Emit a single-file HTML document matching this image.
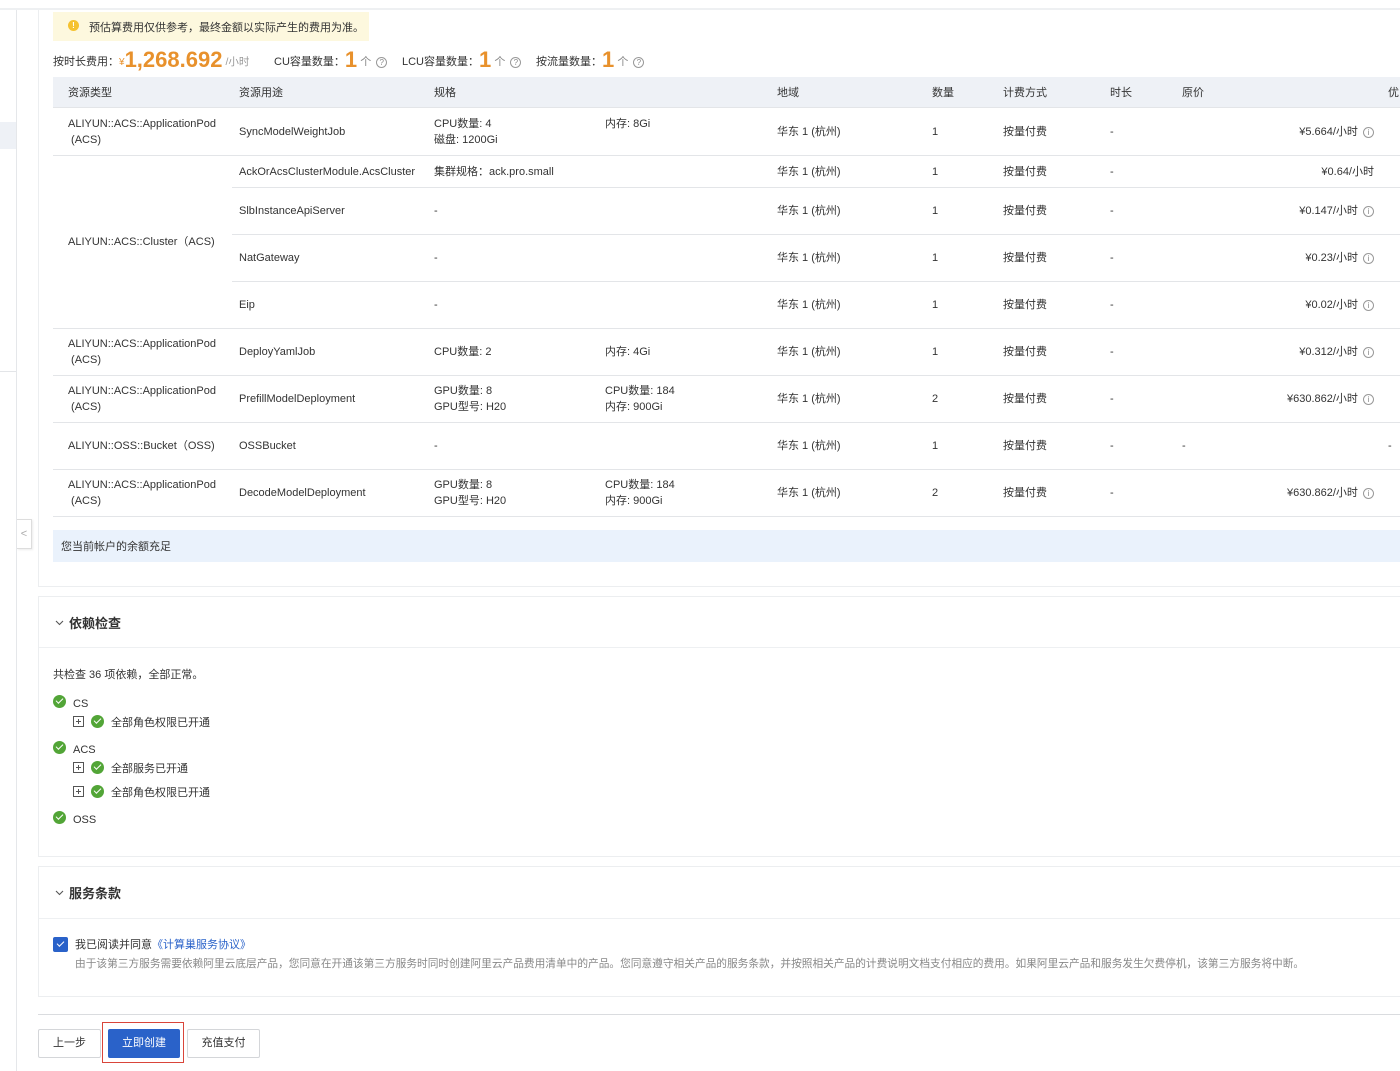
<!DOCTYPE html>
<html><head><meta charset="utf-8">
<style>
*{margin:0;padding:0;box-sizing:border-box}
body{width:1400px;height:1071px;overflow:hidden;background:#fff;font-family:"Liberation Sans","Noto Sans CJK SC",sans-serif;color:#333;font-size:11px;position:relative}
.a{position:absolute;white-space:nowrap}
.t{line-height:14px;transform:translateY(1px)}
.t2{line-height:16px;transform:translateY(1px)}
.hl{position:absolute;height:1px;background:#e3e5e8}
.ic{display:inline-block;width:11px;height:11px;border:1px solid #999;border-radius:50%;font-size:8px;line-height:9px;text-align:center;color:#888;vertical-align:middle;margin-left:2px}
.ok{position:absolute;width:13px;height:13px;border-radius:50%;background:#52a537}
.ok:after{content:"";position:absolute;left:3px;top:3px;width:6px;height:3px;border-left:1.6px solid #fff;border-bottom:1.6px solid #fff;transform:rotate(-45deg)}
.pl{position:absolute;width:11px;height:11px;border:1px solid #555}
.pl:before{content:"";position:absolute;left:2px;top:4px;width:5px;height:1px;background:#555}
.pl:after{content:"";position:absolute;left:4px;top:2px;width:1px;height:5px;background:#555}
.btn{position:absolute;height:29px;border:1px solid #d4d6d9;border-radius:2px;background:#fff;font-size:11px;text-align:center;line-height:27px;color:#333}
</style></head><body>
<div class="a" style="left:0;top:0;width:1400px;height:10px;background:#fff;border-bottom:2px solid #eef0f2"></div>
<div class="a" style="left:0;top:10px;width:17px;height:1061px;border-right:1px solid #e5e7ea;background:#fff"></div>
<div class="a" style="left:0;top:122px;width:16px;height:27px;background:#eef1f6"></div>
<div class="hl" style="left:0;top:371px;width:16px"></div>
<div class="a" style="left:17px;top:519px;width:15px;height:30px;border:1px solid #ddd;border-left:none;background:#fff;color:#aaa;font-size:11px;line-height:28px;text-align:center;box-shadow:1px 1px 2px rgba(0,0,0,.08)">&lt;</div>
<div class="a" style="left:38px;top:10px;width:1370px;height:577px;border:1px solid #eceef0;border-top:none"></div>
<div class="a" style="left:53px;top:12px;width:316px;height:29px;background:#fdf8de"></div>
<div class="a" style="left:68px;top:20px;width:11px;height:11px;border-radius:50%;background:#f5c230;color:#fff;font-size:8px;line-height:11px;text-align:center;font-weight:bold">!</div>
<div class="a t" style="left:89px;top:20px;color:#333">预估算费用仅供参考，最终金额以实际产生的费用为准。</div>
<div class="a" style="left:53px;top:48px;height:24px;line-height:24px;font-size:11px;color:#333">按时长费用：<span style="color:#e8912c;font-size:10px">¥</span><span style="color:#e8912c;font-size:22px;font-weight:bold;vertical-align:-2px">1,268.692</span> <span style="color:#999;font-size:10.5px">/小时</span></div>
<div class="a" style="left:274px;top:48px;height:24px;line-height:24px">CU容量数量：<span style="color:#e8912c;font-size:22px;font-weight:bold;vertical-align:-2px">1</span> <span style="color:#888">个</span> <span class="ic">?</span></div>
<div class="a" style="left:402px;top:48px;height:24px;line-height:24px">LCU容量数量：<span style="color:#e8912c;font-size:22px;font-weight:bold;vertical-align:-2px">1</span> <span style="color:#888">个</span> <span class="ic">?</span></div>
<div class="a" style="left:536px;top:48px;height:24px;line-height:24px">按流量数量：<span style="color:#e8912c;font-size:22px;font-weight:bold;vertical-align:-2px">1</span> <span style="color:#888">个</span> <span class="ic">?</span></div>
<div class="a" style="left:53px;top:77px;width:1347px;height:30px;background:#eef1f6"></div>
<div class="a t" style="left:68px;top:85px">资源类型</div>
<div class="a t" style="left:239px;top:85px">资源用途</div>
<div class="a t" style="left:434px;top:85px">规格</div>
<div class="a t" style="left:777px;top:85px">地域</div>
<div class="a t" style="left:932px;top:85px">数量</div>
<div class="a t" style="left:1003px;top:85px">计费方式</div>
<div class="a t" style="left:1110px;top:85px">时长</div>
<div class="a t" style="left:1182px;top:85px">原价</div>
<div class="a t" style="left:1388px;top:85px">优</div>
<div class="hl" style="left:53px;top:107px;width:1347px"></div>
<div class="hl" style="left:53px;top:155px;width:1347px"></div>
<div class="hl" style="left:232px;top:187px;width:1168px"></div>
<div class="hl" style="left:232px;top:234px;width:1168px"></div>
<div class="hl" style="left:232px;top:281px;width:1168px"></div>
<div class="hl" style="left:53px;top:328px;width:1347px"></div>
<div class="hl" style="left:53px;top:375px;width:1347px"></div>
<div class="hl" style="left:53px;top:422px;width:1347px"></div>
<div class="hl" style="left:53px;top:469px;width:1347px"></div>
<div class="hl" style="left:53px;top:516px;width:1347px"></div>
<div class="a t2" style="left:68px;top:115px">ALIYUN::ACS::ApplicationPod<br>&nbsp;(ACS)</div>
<div class="a t" style="left:239px;top:124px">SyncModelWeightJob</div>
<div class="a t2" style="left:434px;top:115px">CPU数量: 4<br>磁盘: 1200Gi</div>
<div class="a t" style="left:605px;top:116px">内存: 8Gi</div>
<div class="a t" style="left:68px;top:234px">ALIYUN::ACS::Cluster（ACS)</div>
<div class="a t" style="left:239px;top:164px">AckOrAcsClusterModule.AcsCluster</div>
<div class="a t" style="left:434px;top:164px">集群规格：ack.pro.small</div>
<div class="a t" style="left:239px;top:203px">SlbInstanceApiServer</div>
<div class="a t" style="left:434px;top:203px">-</div>
<div class="a t" style="left:239px;top:250px">NatGateway</div>
<div class="a t" style="left:434px;top:250px">-</div>
<div class="a t" style="left:239px;top:297px">Eip</div>
<div class="a t" style="left:434px;top:297px">-</div>
<div class="a t2" style="left:68px;top:335px">ALIYUN::ACS::ApplicationPod<br>&nbsp;(ACS)</div>
<div class="a t" style="left:239px;top:344px">DeployYamlJob</div>
<div class="a t" style="left:434px;top:344px">CPU数量: 2</div>
<div class="a t" style="left:605px;top:344px">内存: 4Gi</div>
<div class="a t2" style="left:68px;top:382px">ALIYUN::ACS::ApplicationPod<br>&nbsp;(ACS)</div>
<div class="a t" style="left:239px;top:391px">PrefillModelDeployment</div>
<div class="a t2" style="left:434px;top:382px">GPU数量: 8<br>GPU型号: H20</div>
<div class="a t2" style="left:605px;top:382px">CPU数量: 184<br>内存: 900Gi</div>
<div class="a t" style="left:68px;top:438px">ALIYUN::OSS::Bucket（OSS)</div>
<div class="a t" style="left:239px;top:438px">OSSBucket</div>
<div class="a t" style="left:434px;top:438px">-</div>
<div class="a t" style="left:1182px;top:438px">-</div>
<div class="a t" style="left:1388px;top:438px">-</div>
<div class="a t2" style="left:68px;top:476px">ALIYUN::ACS::ApplicationPod<br>&nbsp;(ACS)</div>
<div class="a t" style="left:239px;top:485px">DecodeModelDeployment</div>
<div class="a t2" style="left:434px;top:476px">GPU数量: 8<br>GPU型号: H20</div>
<div class="a t2" style="left:605px;top:476px">CPU数量: 184<br>内存: 900Gi</div>
<div class="a t" style="left:777px;top:124px">华东 1 (杭州)</div><div class="a t" style="left:932px;top:124px">1</div><div class="a t" style="left:1003px;top:124px">按量付费</div><div class="a t" style="left:1110px;top:124px">-</div>
<div class="a t" style="left:777px;top:164px">华东 1 (杭州)</div><div class="a t" style="left:932px;top:164px">1</div><div class="a t" style="left:1003px;top:164px">按量付费</div><div class="a t" style="left:1110px;top:164px">-</div>
<div class="a t" style="left:777px;top:203px">华东 1 (杭州)</div><div class="a t" style="left:932px;top:203px">1</div><div class="a t" style="left:1003px;top:203px">按量付费</div><div class="a t" style="left:1110px;top:203px">-</div>
<div class="a t" style="left:777px;top:250px">华东 1 (杭州)</div><div class="a t" style="left:932px;top:250px">1</div><div class="a t" style="left:1003px;top:250px">按量付费</div><div class="a t" style="left:1110px;top:250px">-</div>
<div class="a t" style="left:777px;top:297px">华东 1 (杭州)</div><div class="a t" style="left:932px;top:297px">1</div><div class="a t" style="left:1003px;top:297px">按量付费</div><div class="a t" style="left:1110px;top:297px">-</div>
<div class="a t" style="left:777px;top:344px">华东 1 (杭州)</div><div class="a t" style="left:932px;top:344px">1</div><div class="a t" style="left:1003px;top:344px">按量付费</div><div class="a t" style="left:1110px;top:344px">-</div>
<div class="a t" style="left:777px;top:391px">华东 1 (杭州)</div><div class="a t" style="left:932px;top:391px">2</div><div class="a t" style="left:1003px;top:391px">按量付费</div><div class="a t" style="left:1110px;top:391px">-</div>
<div class="a t" style="left:777px;top:438px">华东 1 (杭州)</div><div class="a t" style="left:932px;top:438px">1</div><div class="a t" style="left:1003px;top:438px">按量付费</div><div class="a t" style="left:1110px;top:438px">-</div>
<div class="a t" style="left:777px;top:485px">华东 1 (杭州)</div><div class="a t" style="left:932px;top:485px">2</div><div class="a t" style="left:1003px;top:485px">按量付费</div><div class="a t" style="left:1110px;top:485px">-</div>
<div class="a t" style="right:26px;top:124px">¥5.664/小时 <span class="ic">i</span></div>
<div class="a t" style="right:26px;top:164px">¥0.64/小时</div>
<div class="a t" style="right:26px;top:203px">¥0.147/小时 <span class="ic">i</span></div>
<div class="a t" style="right:26px;top:250px">¥0.23/小时 <span class="ic">i</span></div>
<div class="a t" style="right:26px;top:297px">¥0.02/小时 <span class="ic">i</span></div>
<div class="a t" style="right:26px;top:344px">¥0.312/小时 <span class="ic">i</span></div>
<div class="a t" style="right:26px;top:391px">¥630.862/小时 <span class="ic">i</span></div>
<div class="a t" style="right:26px;top:485px">¥630.862/小时 <span class="ic">i</span></div>
<div class="a" style="left:53px;top:530px;width:1347px;height:32px;background:#eaf2fc"></div>
<div class="a t" style="left:61px;top:539px;color:#333">您当前帐户的余额充足</div>
<div class="a" style="left:38px;top:596px;width:1370px;height:261px;border:1px solid #eceef0"></div>
<div class="hl" style="left:39px;top:647px;width:1361px;background:#eef0f2"></div>
<svg class="a" style="left:55px;top:620px" width="9" height="6" viewBox="0 0 9 6"><polyline points="1,1 4.5,4.5 8,1" fill="none" stroke="#555" stroke-width="1.1"/></svg>
<div class="a" style="left:69px;top:616px;font-size:13px;font-weight:bold;color:#333;line-height:16px">依赖检查</div>
<div class="a t" style="left:53px;top:667px">共检查 36 项依赖，全部正常。</div>
<div class="ok" style="left:53px;top:695px"></div><div class="a t" style="left:73px;top:696px">CS</div>
<div class="pl" style="left:73px;top:716px"></div><div class="ok" style="left:91px;top:715px"></div><div class="a t" style="left:111px;top:715px">全部角色权限已开通</div>
<div class="ok" style="left:53px;top:741px"></div><div class="a t" style="left:73px;top:742px">ACS</div>
<div class="pl" style="left:73px;top:762px"></div><div class="ok" style="left:91px;top:761px"></div><div class="a t" style="left:111px;top:761px">全部服务已开通</div>
<div class="pl" style="left:73px;top:786px"></div><div class="ok" style="left:91px;top:785px"></div><div class="a t" style="left:111px;top:785px">全部角色权限已开通</div>
<div class="ok" style="left:53px;top:811px"></div><div class="a t" style="left:73px;top:812px">OSS</div>
<div class="a" style="left:38px;top:866px;width:1370px;height:131px;border:1px solid #eceef0"></div>
<div class="hl" style="left:39px;top:918px;width:1361px;background:#eef0f2"></div>
<svg class="a" style="left:55px;top:890px" width="9" height="6" viewBox="0 0 9 6"><polyline points="1,1 4.5,4.5 8,1" fill="none" stroke="#555" stroke-width="1.1"/></svg>
<div class="a" style="left:69px;top:886px;font-size:13px;font-weight:bold;color:#333;line-height:16px">服务条款</div>
<div class="a" style="left:53px;top:937px;width:15px;height:15px;background:#2a62c9;border-radius:2px"></div>
<div class="a" style="left:57px;top:941px;width:7px;height:4px;border-left:1.8px solid #fff;border-bottom:1.8px solid #fff;transform:rotate(-45deg)"></div>
<div class="a t" style="left:75px;top:937px">我已阅读并同意<span style="color:#2a62c9">《计算巢服务协议》</span></div>
<div class="a t" style="left:75px;top:956px;font-size:10.7px;color:#888">由于该第三方服务需要依赖阿里云底层产品，您同意在开通该第三方服务时同时创建阿里云产品费用清单中的产品。您同意遵守相关产品的服务条款，并按照相关产品的计费说明文档支付相应的费用。如果阿里云产品和服务发生欠费停机，该第三方服务将中断。</div>
<div class="hl" style="left:38px;top:1014px;width:1362px;background:#dadcdf"></div>
<div class="btn" style="left:38px;top:1029px;width:63px">上一步</div>
<div class="a" style="left:102px;top:1022px;width:82px;height:41px;border:1px solid #d9453a"></div>
<div class="btn" style="left:108px;top:1029px;width:72px;background:#2a62c9;border-color:#2a62c9;color:#fff">立即创建</div>
<div class="btn" style="left:187px;top:1029px;width:73px">充值支付</div>
</body></html>
